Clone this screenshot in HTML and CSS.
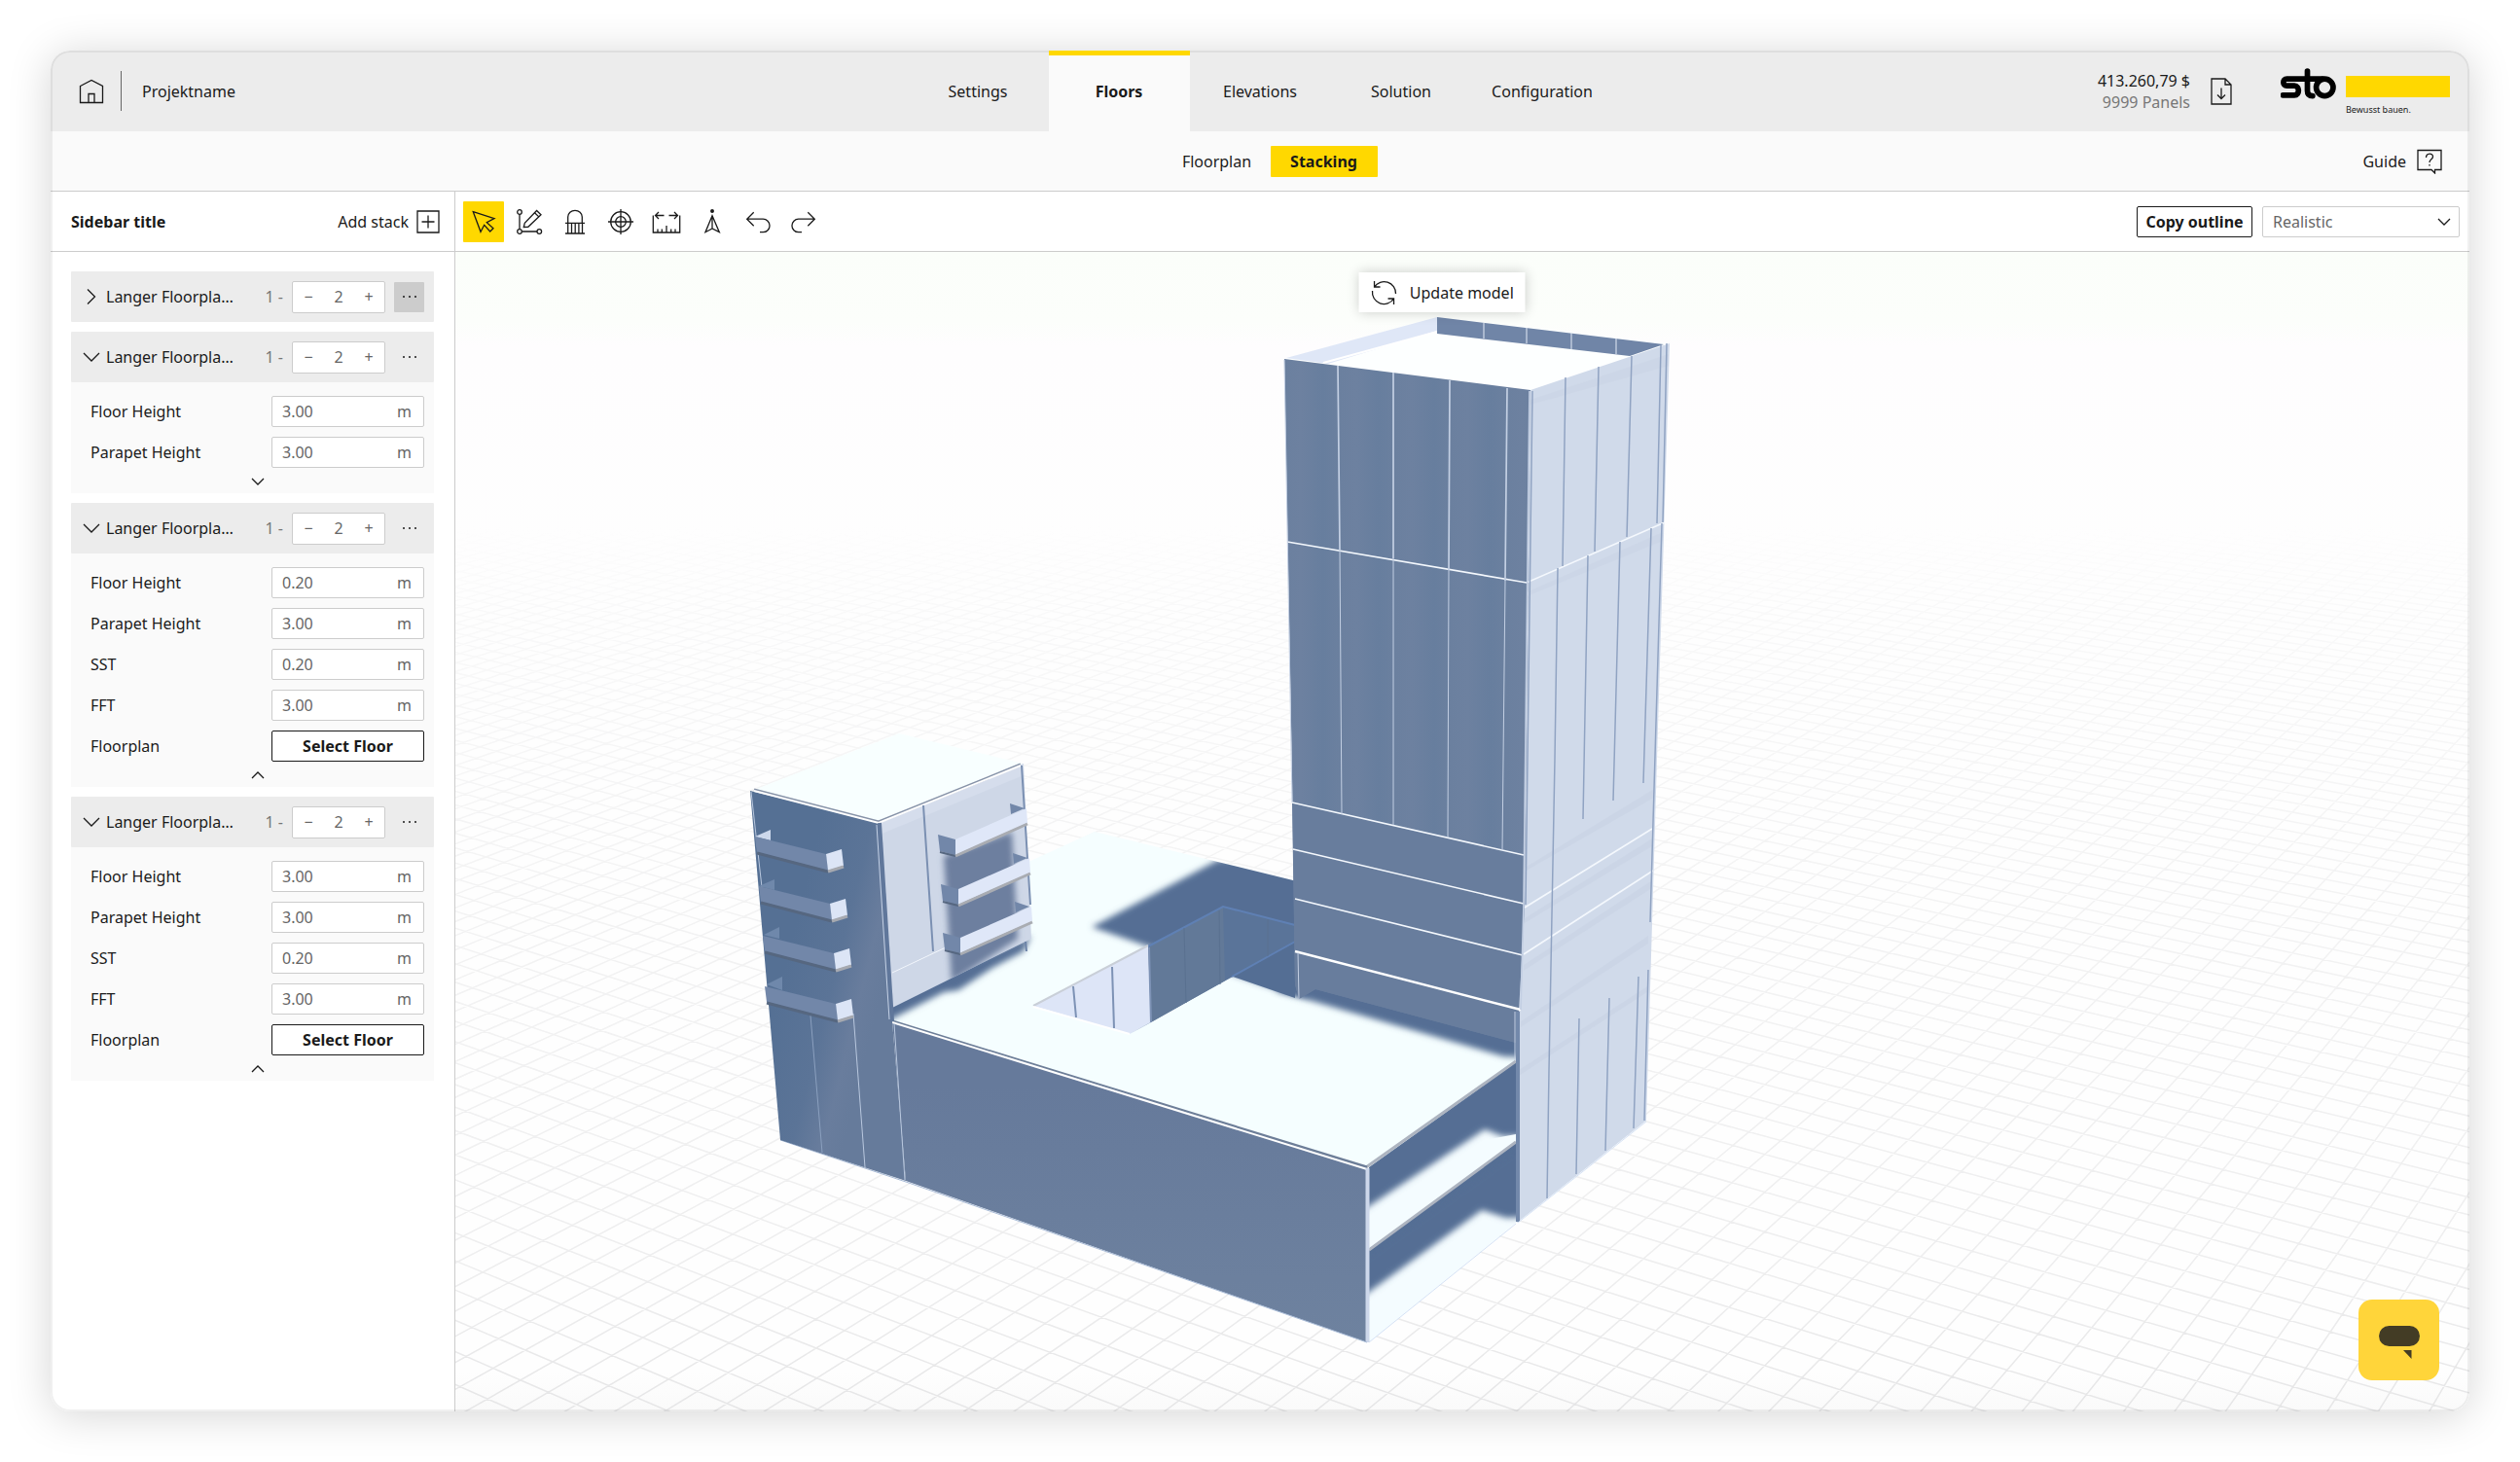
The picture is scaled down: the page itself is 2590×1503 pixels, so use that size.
FILE: index.html
```html
<!DOCTYPE html>
<html lang="en">
<head>
<meta charset="utf-8">
<meta name="viewport" content="width=device-width, initial-scale=1">
<title>Projektname – Stacking</title>
<link rel="stylesheet" href="styles.css">
</head>
<body>
<div class="app">
  <header class="header">
    <div class="header-left">
      <a class="home" href="#" aria-label="Home">
        <svg width="26" height="26" viewBox="0 0 26 26"><path d="M1.5 7.5 13 1.5l11.500 6v17h-23zM10 24.500v-9h6v9"/></svg>
      </a>
      <span class="divider"></span>
      <span>Projektname</span>
    </div>
    <nav class="tabs" aria-label="Steps">
      <a href="#">Settings</a>
      <a href="#" class="active" aria-current="page">Floors</a>
      <a href="#">Elevations</a>
      <a href="#">Solution</a>
      <a href="#">Configuration</a>
    </nav>
    <div class="header-right">
      <div class="price"><span>413.260,79 $</span><span class="muted">9999 Panels</span></div>
      <button class="plain export" aria-label="Download quote">
        <svg width="22" height="28" viewBox="0 0 22 28"><path d="M1 1h14l6 6v20H1zM15 1v6h6M11 10.500v11M7 17.500l4 4 4-4"/></svg>
      </button>
      <div class="brand">
        <svg class="logo" width="57" height="32" viewBox="0 0 170 95" aria-label="sto"><path d="M128 33H19c-14 0-14 21 0 21h23c17 0 17 29 0 29H7M82 9v60q0 16 16 16"/><circle cx="135" cy="59" r="26"/></svg>
        <div class="claim"><span class="claim-bar"></span><span>Bewusst bauen.</span></div>
      </div>
    </div>
  </header>

  <div class="subbar">
    <nav class="subtabs" aria-label="Floors views">
      <a href="#">Floorplan</a>
      <a href="#" class="active" aria-current="page">Stacking</a>
    </nav>
    <a href="#" class="guide">Guide
      <svg width="26" height="26" viewBox="0 0 26 26"><path d="M1 1.500h24v20h-6.500v3.500l-3.500-3.500H1z"/><path d="M9.500 9c0-5 7-5 7-1 0 3-3.500 2.500-3.500 6M13 16v1.500"/></svg>
    </a>
  </div>

  <div class="workspace">
    <aside class="sidebar">
      <div class="sidebar-head">
        <h1>Sidebar title</h1>
        <button class="plain add">Add stack
          <svg width="24" height="24" viewBox="0 0 24 24"><path d="M1 1h22v22H1zM12 5.500v13M5.500 12h13"/></svg>
        </button>
      </div>
      <div class="stacks">
        <section class="stack">
          <div class="stack-head">
            <button class="plain name" aria-expanded="false"><svg width="18" height="18" viewBox="0 0 18 18"><path d="m5 1.500 7.500 7.500L5 16.500"/></svg>Langer Floorpla…</button>
            <span class="from">1 -</span>
            <div class="stepper"><button class="plain" aria-label="Less">−</button><input aria-label="Floors" value="2"><button class="plain" aria-label="More">+</button></div>
            <button class="plain more on" aria-label="Options"><svg width="16" height="4" viewBox="0 0 16 4"><circle cx="2" cy="2" r="1"/><circle cx="8" cy="2" r="1"/><circle cx="14" cy="2" r="1"/></svg></button>
          </div>
        </section>

        <section class="stack">
          <div class="stack-head">
            <button class="plain name" aria-expanded="true"><svg width="18" height="18" viewBox="0 0 18 18"><path d="m1 5 8 8 8-8"/></svg>Langer Floorpla…</button>
            <span class="from">1 -</span>
            <div class="stepper"><button class="plain" aria-label="Less">−</button><input aria-label="Floors" value="2"><button class="plain" aria-label="More">+</button></div>
            <button class="plain more" aria-label="Options"><svg width="16" height="4" viewBox="0 0 16 4"><circle cx="2" cy="2" r="1"/><circle cx="8" cy="2" r="1"/><circle cx="14" cy="2" r="1"/></svg></button>
          </div>
          <div class="stack-body">
            <div class="row"><label for="a1">Floor Height</label><span class="field"><input id="a1" value="3.00"><span>m</span></span></div>
            <div class="row"><label for="a2">Parapet Height</label><span class="field"><input id="a2" value="3.00"><span>m</span></span></div>
            <button class="plain toggle" aria-label="Show more"><svg width="14" height="8" viewBox="0 0 14 8"><path d="m1 1 6 6 6-6"/></svg></button>
          </div>
        </section>

        <section class="stack">
          <div class="stack-head">
            <button class="plain name" aria-expanded="true"><svg width="18" height="18" viewBox="0 0 18 18"><path d="m1 5 8 8 8-8"/></svg>Langer Floorpla…</button>
            <span class="from">1 -</span>
            <div class="stepper"><button class="plain" aria-label="Less">−</button><input aria-label="Floors" value="2"><button class="plain" aria-label="More">+</button></div>
            <button class="plain more" aria-label="Options"><svg width="16" height="4" viewBox="0 0 16 4"><circle cx="2" cy="2" r="1"/><circle cx="8" cy="2" r="1"/><circle cx="14" cy="2" r="1"/></svg></button>
          </div>
          <div class="stack-body">
            <div class="row"><label for="b1">Floor Height</label><span class="field"><input id="b1" value="0.20"><span>m</span></span></div>
            <div class="row"><label for="b2">Parapet Height</label><span class="field"><input id="b2" value="3.00"><span>m</span></span></div>
            <div class="row"><label for="b3">SST</label><span class="field"><input id="b3" value="0.20"><span>m</span></span></div>
            <div class="row"><label for="b4">FFT</label><span class="field"><input id="b4" value="3.00"><span>m</span></span></div>
            <div class="row"><label for="b5">Floorplan</label><button id="b5" class="outline">Select Floor</button></div>
            <button class="plain toggle" aria-label="Show less"><svg width="14" height="8" viewBox="0 0 14 8"><path d="m1 7 6-6 6 6"/></svg></button>
          </div>
        </section>

        <section class="stack">
          <div class="stack-head">
            <button class="plain name" aria-expanded="true"><svg width="18" height="18" viewBox="0 0 18 18"><path d="m1 5 8 8 8-8"/></svg>Langer Floorpla…</button>
            <span class="from">1 -</span>
            <div class="stepper"><button class="plain" aria-label="Less">−</button><input aria-label="Floors" value="2"><button class="plain" aria-label="More">+</button></div>
            <button class="plain more" aria-label="Options"><svg width="16" height="4" viewBox="0 0 16 4"><circle cx="2" cy="2" r="1"/><circle cx="8" cy="2" r="1"/><circle cx="14" cy="2" r="1"/></svg></button>
          </div>
          <div class="stack-body">
            <div class="row"><label for="c1">Floor Height</label><span class="field"><input id="c1" value="3.00"><span>m</span></span></div>
            <div class="row"><label for="c2">Parapet Height</label><span class="field"><input id="c2" value="3.00"><span>m</span></span></div>
            <div class="row"><label for="c3">SST</label><span class="field"><input id="c3" value="0.20"><span>m</span></span></div>
            <div class="row"><label for="c4">FFT</label><span class="field"><input id="c4" value="3.00"><span>m</span></span></div>
            <div class="row"><label for="c5">Floorplan</label><button id="c5" class="outline">Select Floor</button></div>
            <button class="plain toggle" aria-label="Show less"><svg width="14" height="8" viewBox="0 0 14 8"><path d="m1 7 6-6 6 6"/></svg></button>
          </div>
        </section>
      </div>
    </aside>

    <main class="main">
      <div class="toolbar">
        <div class="tools">
          <button class="plain tool on" aria-label="Select"><svg width="30" height="30" viewBox="0 0 30 30"><path d="M4.300 4.700 26 11.700l-7.700 4 6.700 6-3.300 3.300-6-6.700-3.700 7z"/></svg></button>
          <button class="plain tool" aria-label="Edit outline"><svg width="30" height="30" viewBox="0 0 30 30"><circle cx="5" cy="5" r="2.300"/><circle cx="5" cy="25" r="2.300"/><circle cx="25.300" cy="25" r="2.300"/><path d="M5 7.500v15M7.500 25H23M9.300 20.500l1-4.300L22.600 3.500l4.400 4.300-13.200 12.500zM20.500 5.700l4.300 4.200"/></svg></button>
          <button class="plain tool" aria-label="Balcony"><svg width="30" height="30" viewBox="0 0 30 30"><path d="M7.700 16.300V10a7.300 6.700 0 0 1 14.600 0v6.300M5 16.300h20M5 27h20M7.700 16.300V27M11.500 16.300V27M15.200 16.300V27M18.900 16.300V27M22.500 16.300V27"/></svg></button>
          <button class="plain tool" aria-label="Set origin"><svg width="30" height="30" viewBox="0 0 30 30"><circle cx="15" cy="15" r="10.300"/><circle cx="15" cy="15" r="5.300"/><path d="M15 2v26M2 15h26"/></svg></button>
          <button class="plain tool" aria-label="Measure"><svg width="30" height="30" viewBox="0 0 30 30"><path d="M1.300 8.500V26h27.400V8.500M6 26v-3.500M10.300 26v-3.500M15 26v-7M19.700 26v-3.500M24 26v-3.500M12.500 8.500h-9M7 5 3.500 8.500 7 12M17.500 8.500h9M23 5l3.500 3.500L23 12"/></svg></button>
          <button class="plain tool" aria-label="North"><svg width="30" height="30" viewBox="0 0 30 30"><path d="M15 8.700 8 25.700l7-3.700 7.300 3.700zV22"/><circle cx="15" cy="4" r="1.300" fill="#1a1a1a"/></svg></button>
          <button class="plain tool" aria-label="Undo"><svg width="30" height="30" viewBox="0 0 30 30"><path d="M10.700 5.300 3.700 12.200l7 7M3.700 12.200h16.600a6.700 6.700 0 0 1 0 13.500H17"/></svg></button>
          <button class="plain tool" aria-label="Redo"><svg width="30" height="30" viewBox="0 0 30 30"><path d="m19.300 5.300 7 6.900-7 7M26.300 12.200H9.700a6.700 6.700 0 0 0 0 13.500H13"/></svg></button>
        </div>
        <button class="outline copy">Copy outline</button>
        <div class="select">
          <select aria-label="Display mode"><option>Realistic</option><option>Outline</option></select>
          <svg width="14" height="8" viewBox="0 0 14 8"><path d="m1 1 6 6 6-6"/></svg>
        </div>
      </div>

      <div class="scene">
        <svg class="model" viewBox="468 259 2070 1192" preserveAspectRatio="xMidYMid slice" role="img" aria-label="Building model">
          <defs>
            <linearGradient id="sky" x1="0" y1="0" x2="0" y2="1"><stop offset="0" stop-color="#fbfefa"/><stop offset=".06" stop-color="#fcfefb"/><stop offset=".08" stop-color="#fefdfe"/><stop offset=".3" stop-color="#fefefe"/><stop offset=".96" stop-color="#fefefe"/><stop offset="1" stop-color="#f9f9f9"/></linearGradient>
            <linearGradient id="fade" gradientUnits="userSpaceOnUse" x1="0" y1="540" x2="0" y2="1451"><stop offset="0" stop-color="#fff" stop-opacity="0"/><stop offset=".1" stop-color="#fff" stop-opacity=".2"/><stop offset=".35" stop-color="#fff" stop-opacity=".4"/><stop offset=".85" stop-color="#fff" stop-opacity=".7"/><stop offset="1" stop-color="#fff"/></linearGradient>
            <mask id="gridMask" maskUnits="userSpaceOnUse" x="0" y="259" width="3000" height="1200"><rect x="0" y="259" width="3000" height="1200" fill="url(#fade)"/></mask>
            <linearGradient id="panel" gradientUnits="userSpaceOnUse" x1="1320" y1="0" x2="1377" y2="0" spreadMethod="repeat"><stop offset="0" stop-color="#6b809f"/><stop offset=".3" stop-color="#6d81a0"/><stop offset=".7" stop-color="#677e9e"/><stop offset="1" stop-color="#6b809f"/></linearGradient>
            <linearGradient id="front" x1="0" y1="0" x2="0" y2="1"><stop offset=".2" stop-color="#667a9b"/><stop offset="1" stop-color="#6e829f"/></linearGradient>
            <linearGradient id="block" gradientUnits="userSpaceOnUse" x1="800" y1="1020" x2="900" y2="1045"><stop offset="0" stop-color="#557094"/><stop offset=".5" stop-color="#5b7497"/><stop offset=".8" stop-color="#697d9d"/><stop offset="1" stop-color="#667b9b"/></linearGradient>
            <filter id="soft" x="-20%" y="-20%" width="140%" height="140%"><feGaussianBlur stdDeviation="3"/></filter>
            <clipPath id="roofClip"><path d="M1125 855 1329 905 1558 1000V1090L1404 1200 917 1050V950Z"/></clipPath>
            <clipPath id="openClip"><path d="M1407 1200 1558 1092V1257L1407 1380Z"/></clipPath>
            <clipPath id="sideClip"><path d="M904 846 1052 785 1060 965 917 1036Z"/></clipPath>
          </defs>
          <rect x="0" y="259" width="3000" height="1200" fill="url(#sky)"/>
          <g mask="url(#gridMask)"><path id="grid" fill="none" stroke="#e6e6e7" stroke-width="1.500"/></g>

          <!-- low roof with its shadows -->
          <path d="M1125 855 1329 905 1558 1000V1090L1404 1200 917 1050V950Z" fill="#f5feff"/>
          <g clip-path="url(#roofClip)" fill="#546e94">
            <path filter="url(#soft)" d="M1252 884 1345 880V1025L1320 1020 1268 1002 1180 973 1122 953Z"/>
            <path filter="url(#soft)" d="M1310 1018 1350 1005 1570 1065V1087L1545 1086Z"/>
            <path filter="url(#soft)" d="M905 1030 1060 962 1052 978 1020 995 985 1018 970 1020 912 1050Z"/>
          </g>
          <path d="M1062 1034 1180 972 1183 1051 1161 1063Z" fill="#dde5f7"/>
          <path d="M1257 932 1331 950V969L1267 1004 1161 1063 1183 1051Z" fill="#5a7499"/>
          <path d="M1180 972 1257 932 1259 1008 1183 1051Z" fill="#627998"/>
          <path d="M1267 1004 1331 969V1026Z" fill="#546e94"/>
          <path d="M1180 973 1257 932 1331 951M1266 1004 1331 968" fill="none" stroke="#5f80b4" stroke-width="2"/>
          <path d="M1103 1014 1106 1046M1143 994 1145 1057M1181 974 1183 1051" stroke="#7d92b5" stroke-width="2"/>
          <path d="M1217 954 1219 1031M1253 936 1254 1012M1303 945V983" stroke="#5a7190" stroke-width="1"/>
          <path d="M1062 1034 1180 972" stroke="#c9cfd8" stroke-width="2"/>
          <path d="M1062 1035 1161 1063" stroke="#fff" stroke-width="2"/>

          <!-- open front end -->
          <path d="M1407 1200 1558 1090V1257L1407 1380Z" fill="#f4fcff"/>
          <g clip-path="url(#openClip)" fill="#546e94">
            <path filter="url(#soft)" d="M1395 1200 1570 1075V1168L1544 1168 1526 1161 1395 1248Z"/>
            <path d="M1407 1283 1558 1172V1190L1407 1302Z"/>
            <path filter="url(#soft)" d="M1395 1297 1570 1172V1251L1548 1252 1523 1244 1395 1337Z"/>
            <path d="M1407 1284 1558 1174 1558 1166 1526 1172 1407 1255Z" fill="#f4fcff"/>
          </g>
          <path d="M1404 1200 1558 1091M1407 1285 1558 1174" stroke="#adb4c0" stroke-width="3"/>
          <path d="M1407 1380 1558 1258" stroke="#d5e2f5" stroke-width="1"/>

          <!-- long front wall -->
          <path d="M917 1050 1405 1201V1380L931 1214Z" fill="url(#front)"/>
          <path d="M917 1050 1405 1200" stroke="#6d7e98" stroke-width="3"/>
          <path d="M917 1051 1405 1202" stroke="#fff" stroke-width="2"/>
          <path d="M1405.500 1201V1380" stroke="#cdd7ea" stroke-width="4"/>
          <path d="M802 1172 931 1215 1405 1380" fill="none" stroke="#a8bbd7" stroke-width="1"/>

          <!-- left block -->
          <path d="M775 812 924 754 1052 785 902 845Z" fill="#f8ffff"/>
          <path d="M771 813 904 845 917 1050 931 1214 802 1172Z" fill="url(#block)"/>
          <path d="M904 846 1052 785 1060 965 917 1036Z" fill="#ced7e7"/>
          <g clip-path="url(#sideClip)">
            <path d="M904 846 1052 785V797L904 858Z" fill="#d5ddec"/>
            <path d="M970 880 1040 855 1046 965 978 1010Z" fill="#6d7f9f" filter="url(#soft)"/>
          </g>
          <path d="M775 812 903 845 1049 786" fill="none" stroke="#8793a8" stroke-width="3"/>
          <path d="M775 813 903 846 1049 787" fill="none" stroke="#fff" stroke-width="2"/>
          <path d="M904 846 917 1050" stroke="#60779b" stroke-width="4"/>
          <path d="M901 848 914 1048" stroke="#c5d2e7" stroke-width="1"/>
          <path d="M949 828 959 978M1050 787 1059 930" stroke="#7b90b2" stroke-width="2"/>
          <path d="M917 1000 972 974" stroke="#f2f6fc" stroke-width="1"/>
          <path d="M772 814 785 930M877 1042 889 1200M919 1052 930 1213" stroke="#b9c8df" stroke-width="1"/>
          <path d="M833 1044 845 1185" stroke="#8ba0bf" stroke-width="1"/>
          <path d="M1054 968 1055 978" stroke="#6d84a8" stroke-width="2"/>

          <defs>
            <g id="balconyL">
              <path d="M776 860 849 878 851 895 778 876Z" fill="#7287a9"/>
              <path d="M849 878 865 873 867 890 851 895Z" fill="#dce5f6"/>
              <path d="M778 877 851 896" stroke="#566780" stroke-width="3"/>
              <path d="M851 896 867 891" stroke="#a6a9b0" stroke-width="3"/>
            </g>
            <g id="balconyR">
              <path d="M1038 826 1053 831 1039 837Z" fill="#7287a9"/>
              <path d="M964 858 982 863V879L966 875Z" fill="#7287a9"/>
              <path d="M982 863 1055 831 1056 846 982 879Z" fill="#dfe7f8"/>
              <path d="M966 876 982 880" stroke="#566780" stroke-width="2"/>
              <path d="M982 880 1056 847" stroke="#a9acb2" stroke-width="3"/>
            </g>
          </defs>
          <path d="M776 860 792 853V864Z" fill="#ccd8ec"/>
          <path d="M780 911 796 904V915ZM785 961 801 953V965ZM788 1012 804 1004V1018Z" fill="#6f88ab"/>
          <use href="#balconyL"/><use href="#balconyL" x="4" y="51"/><use href="#balconyL" x="8" y="102"/><use href="#balconyL" x="10" y="154"/>
          <use href="#balconyR"/><use href="#balconyR" x="3" y="51"/><use href="#balconyR" x="5" y="101"/>

          <!-- tower -->
          <path d="M1320 369 1477 326 1716 353 1573 401Z" fill="#fdffff"/>
          <path d="M1322 368 1477 326V340L1365 374Z" fill="#dfe7f7"/>
          <path d="M1360 373 1477 341" stroke="#fff" stroke-width="2"/>
          <path d="M1477 326 1710 354 1675 366 1477 343Z" fill="#7085a7"/>
          <path d="M1525 332V348M1569 337V353M1615 342V359M1661 348V364" stroke="#e4ebf6" stroke-width="1"/>
          <path d="M1320 369 1573 401 1567 940 1564 1038 1558 1072 1352 1017 1335 1027 1331 1012 1328 800Z" fill="url(#panel)"/>
          <path d="M1328 825 1566 879 1564 1038 1558 1072 1352 1017 1335 1027 1331 1012Z" fill="#687d9d"/>
          <path d="M1573 401 1716 353 1703 780 1692 1152 1559 1257 1561 1040 1567 933Z" fill="#d0daea"/>
          <g fill="#c9d3e4" opacity=".6">
            <path d="M1573 411 1715 364V376L1573 416Z"/><path d="M1569 609 1709 547V556L1569 613Z"/>
            <path d="M1567 892 1700 811V820L1567 896Z"/><path d="M1567 944 1698 862V870L1567 949Z"/>
            <path d="M1566 992 1698 905V913L1566 998Z"/><path d="M1563 1050 1694 962V970L1563 1056Z"/>
            <path d="M1561 1100 1693 1014V1020L1561 1106Z"/>
          </g>
          <g fill="none" stroke="#f4f8fd" stroke-width="1.600">
            <path d="M1323 557 1569 599 1711 537M1328 825 1566 879M1329 873 1566 929M1331 924 1565 982M1567 933 1698 852M1566 981 1699 895"/>
            <path d="M1331 978 1563 1038" stroke="#fff" stroke-width="2.400"/>
          </g>
          <g fill="none" stroke="#c3cfe3" stroke-width="1">
            <path stroke-width="1.700" d="M1375 376 1377 565M1432 383V574M1490 391 1489 586M1549 399 1547 597M1572 402 1566 930 1563 1038"/>
            <path d="M1377 565 1379 837M1432 574V848M1489 586 1488 861M1547 597 1544 874M1320 370 1328 825M1334 979 1335 1027M1557 1040V1090"/>
          </g>
          <g fill="none" stroke="#90a3c2" stroke-width="1.500">
            <path d="M1575 402 1568 930M1609 388 1606 582M1643 377 1639 567M1677 366 1672 552M1707 355 1703 538M1713 353 1709 537"/>
            <path d="M1601 584 1598 780 1592 1100 1590 1232M1632 571 1627 842M1665 557 1658 823M1697 543 1689 805M1708 538 1696 948"/>
            <path d="M1623 1047 1620 1207M1654 1026 1650 1183M1684 1004 1679 1160M1694 997 1690 1152"/>
          </g>
          <path d="M1560 1040V1256" stroke="#7389ab" stroke-width="4"/>
          <path d="M1560 1257 1692 1153" stroke="#d5e2f5" stroke-width="1"/>
        </svg>

        <button class="plain update">
          <svg width="28" height="28" viewBox="0 0 28 28"><path d="M4 8A12 12 0 0 1 26 15M24 20A12 12 0 0 1 2 12M4 2v6h6M24 26v-6h-6"/></svg>
          Update model
        </button>
        <button class="plain chat" aria-label="Open chat">
          <svg width="42" height="36" viewBox="0 0 42 36"><rect width="42" height="21" rx="10.500"/><path d="M25 25h8.500v9z"/></svg>
        </button>
      </div>
    </main>
  </div>
</div>
<script src="grid.js"></script>
</body>
</html>
```
FILE: grid.js
```js
// Ground grid in two-point perspective: every line runs to one of the vanishing points.
const origin = [540, 1388];
const left = [-3180, -198];
const right = [3510, -273];

function family(target, other, step, from, to) {
  let d = '';
  for (let n = from; n <= to; n++) {
    const t = n * step;
    if (1 + t <= 0.05) continue;
    const x = (origin[0] + t * other[0]) / (1 + t);
    const y = (origin[1] + t * other[1]) / (1 + t);
    const slope = (y - target[1]) / (x - target[0]);
    const at = px => (target[1] + slope * (px - target[0])).toFixed(1);
    d += `M0 ${at(0)}L3000 ${at(3000)}`;
  }
  return d;
}

document.getElementById('grid').setAttribute(
  'd',
  family(left, right, 0.01105, -12, 180) + family(right, left, 0.0075, -80, 180)
);
```
FILE: styles.css
```css
* { box-sizing: border-box; }

body {
  margin: 0;
  padding: 52px;
  background: #fff;
  color: #1a1a1a;
  font: 16px/22px "Noto Sans", "Open Sans", sans-serif;
}

a { color: inherit; text-decoration: none; }

svg { display: block; flex: none; fill: none; stroke: #1a1a1a; stroke-width: 1.3; }

button, input, select { font: inherit; color: inherit; }
button { cursor: pointer; }

.plain { padding: 0; border: 0; background: none; }

.app {
  position: relative;
  display: flex;
  flex-direction: column;
  min-height: calc(100vh - 104px);
  border-radius: 20px;
  overflow: hidden;
  background: #fff;
  box-shadow: 0 4px 44px rgba(0, 0, 0, .17);
}
.app::after {
  content: "";
  position: absolute;
  inset: 0;
  border-radius: 20px;
  box-shadow: inset 0 0 0 2px rgba(0, 0, 0, .06);
  pointer-events: none;
}

/* header */
.header {
  display: grid;
  grid-template-columns: 1fr auto 1fr;
  height: 83px;
  background: #ececec;
}
.header-left { display: flex; align-items: center; padding-left: 29px; }
.divider { width: 1px; height: 41px; margin: 0 21px 0 17px; background: #666; }
.tabs { display: grid; grid-template-columns: repeat(5, 145px); }
.tabs a { display: grid; place-items: center; }
.tabs .active {
  position: relative;
  z-index: 1;
  background: #fafafa;
  box-shadow: inset 0 5px #ffd800;
  font-weight: 700;
}
.header-right { display: flex; justify-content: flex-end; align-items: center; padding-right: 20px; }
.price { display: grid; text-align: right; }
.muted { color: #777; }
.export { margin: 0 50px 0 21px; }
.brand { display: flex; gap: 10px; }
.logo { margin-top: 3px; stroke: #000; stroke-width: 17; stroke-linecap: round; }
.claim { display: grid; gap: 6px; padding-top: 11px; font-size: 9px; line-height: 14px; }
.claim-bar { width: 107px; height: 22px; background: #ffd800; }

.subbar {
  display: grid;
  grid-template-columns: 1fr auto 1fr;
  align-items: center;
  height: 62px;
  padding: 0 28px 0 49px;
  border-bottom: 1px solid #ccc;
  background: #fafafa;
}
.subtabs { grid-column: 2; display: grid; grid-template-columns: 110px 110px; text-align: center; line-height: 32px; }
.subtabs .active { background: #ffd800; border-radius: 1px; font-weight: 700; }
.guide { display: flex; align-items: center; justify-content: flex-end; gap: 11px; }

/* workspace */
.workspace { flex: 1; display: grid; grid-template-columns: 416px 1fr; }
.sidebar { border-right: 1px solid #ccc; }
.sidebar-head {
  display: flex;
  align-items: center;
  justify-content: space-between;
  height: 62px;
  padding: 0 15px 0 21px;
  border-bottom: 1px solid #ccc;
}
h1 { margin: 0; font-size: 16px; line-height: 22px; }
.add { display: flex; align-items: center; gap: 8px; }

.stacks { display: grid; gap: 10px; padding: 20px 21px; }
.stack-head {
  display: flex;
  align-items: center;
  height: 52px;
  padding: 0 10px 0 12px;
  border-radius: 1px;
  background: #ececec;
}
.name { display: flex; align-items: center; gap: 6px; margin-right: auto; }
.from { margin-right: 9px; color: #777; }
.stepper {
  display: grid;
  grid-template-columns: 32px 1fr 32px;
  width: 96px;
  height: 33px;
  margin-right: 9px;
  border: 1px solid #ccc;
  border-radius: 2px;
  background: #fff;
  color: #666;
}
.stepper input { width: 100%; padding: 0; border: 0; background: none; text-align: center; }
.more { display: grid; place-items: center; width: 31px; height: 31px; border-radius: 1px; }
.more svg { fill: #1a1a1a; stroke: none; }
.more.on { background: #ccc; }

.stack-body { display: grid; gap: 10px; padding: 14px 10px 0 20px; background: #fafafa; }
.row { display: grid; grid-template-columns: 1fr 157px; align-items: center; height: 32px; }
.field {
  display: flex;
  align-items: center;
  height: 32px;
  padding: 0 12px 0 10px;
  border: 1px solid #ccc;
  border-radius: 2px;
  background: #fff;
  color: #666;
}
.field input { flex: 1; min-width: 0; padding: 0; border: 0; background: none; }
.toggle { display: grid; place-items: center; height: 16px; padding-bottom: 8px; }

.outline {
  height: 32px;
  padding: 0;
  border: 1px solid #1a1a1a;
  border-radius: 2px;
  background: #fff;
  font-weight: 700;
}

.main { display: flex; flex-direction: column; min-width: 0; }
.toolbar {
  display: flex;
  align-items: center;
  gap: 10px;
  height: 62px;
  padding: 0 10px 0 8px;
  border-bottom: 1px solid #ccc;
}
.tools { display: flex; gap: 5px; margin-right: auto; }
.tool { display: grid; place-items: center; width: 42px; height: 42px; border-radius: 1px; }
.tool.on { background: #ffd800; }
.copy { width: 119px; }
.select { position: relative; width: 203px; }
.select select {
  display: block;
  width: 100%;
  height: 32px;
  padding: 0 10px;
  border: 1px solid #ccc;
  border-radius: 2px;
  background: #fff;
  color: #666;
  appearance: none;
}
.select svg { position: absolute; top: 12px; right: 9px; pointer-events: none; }

/* scene */
.scene { position: relative; flex: 1; overflow: hidden; }
.model { position: absolute; inset: 0; width: 100%; height: 100%; stroke: none; }
.update {
  position: absolute;
  top: 21px;
  left: 49%;
  display: flex;
  align-items: center;
  gap: 12px;
  height: 41px;
  padding: 0 12px;
  transform: translateX(-50%);
  background: #fff;
  box-shadow: 0 0 12px rgba(0, 0, 0, .2);
}
.chat {
  position: absolute;
  right: 31px;
  bottom: 32px;
  display: grid;
  place-items: center;
  width: 83px;
  height: 83px;
  padding-top: 6px;
  border-radius: 14px;
  background: #ffd53a;
}
.chat svg { fill: #433c25; stroke: none; }
```
